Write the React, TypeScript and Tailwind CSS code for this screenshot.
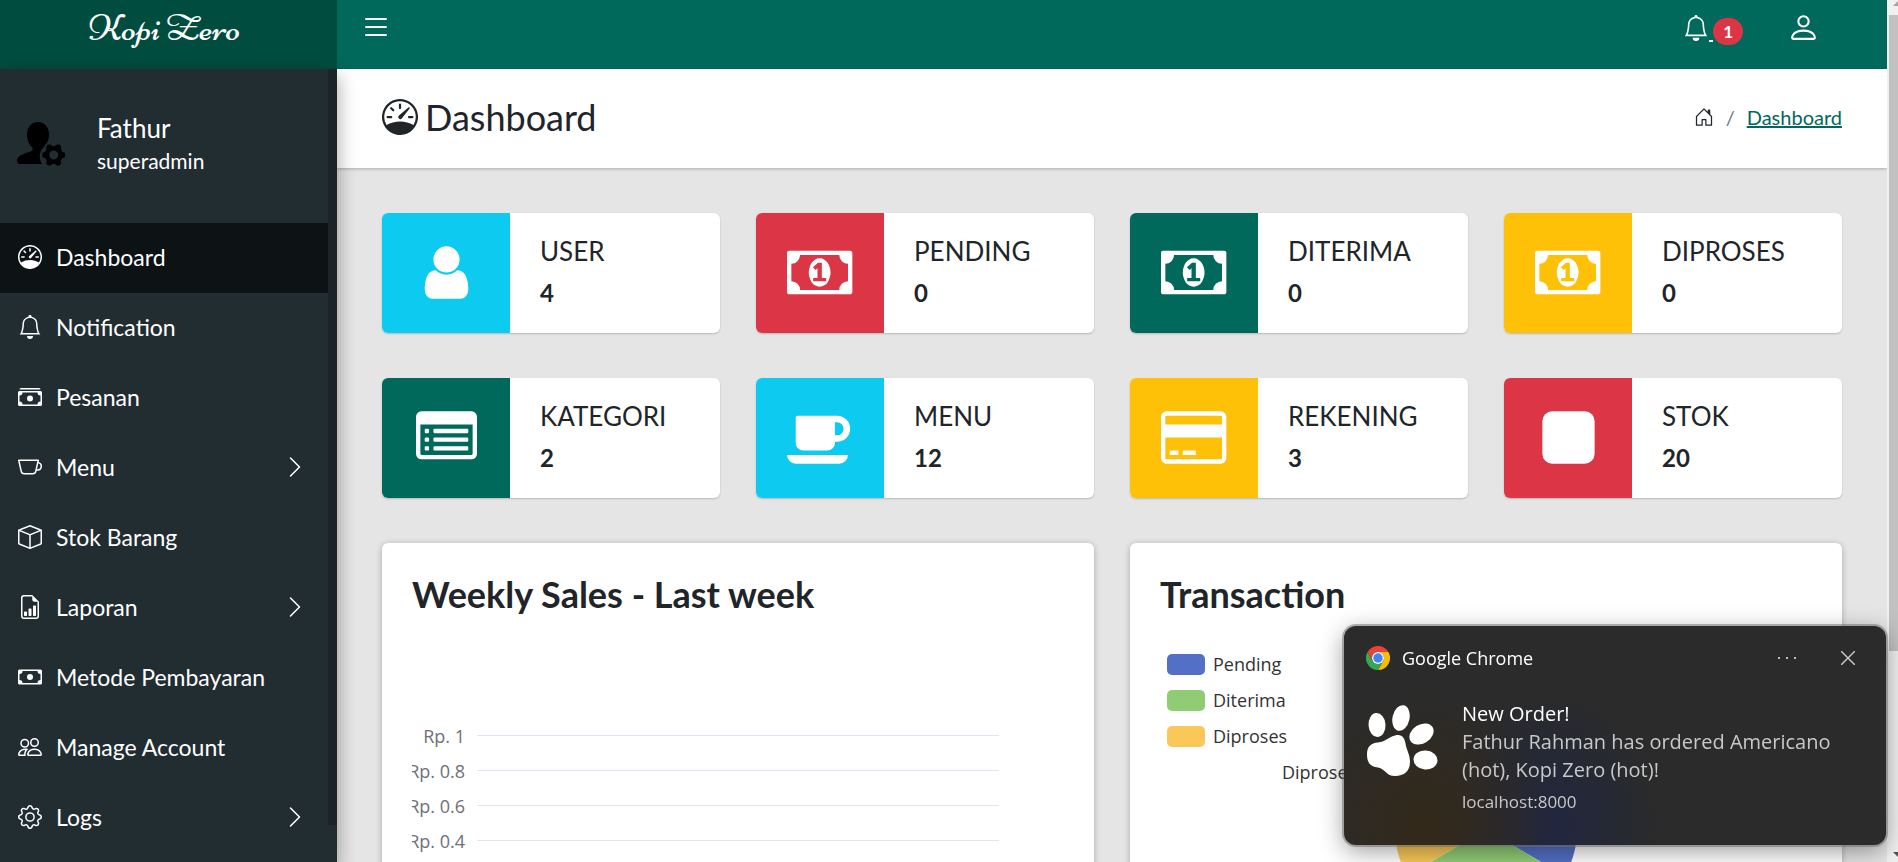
import React from 'react';
import {
  BsSpeedometer, BsBell, BsCashStack, BsCup, BsBox, BsFileEarmarkBarGraph, BsCash, BsPeople, BsGear,
  BsChevronRight, BsList, BsPerson, BsHouseDoor,
} from 'react-icons/bs';

type IconType = React.ComponentType<{ className?: string }>;

const menu: { label: string; icon: IconType; active?: boolean; more?: boolean }[] = [
  { label: 'Dashboard', icon: BsSpeedometer, active: true },
  { label: 'Notification', icon: BsBell },
  { label: 'Pesanan', icon: BsCashStack },
  { label: 'Menu', icon: BsCup, more: true },
  { label: 'Stok Barang', icon: BsBox },
  { label: 'Laporan', icon: BsFileEarmarkBarGraph, more: true },
  { label: 'Metode Pembayaran', icon: BsCash },
  { label: 'Manage Account', icon: BsPeople },
  { label: 'Logs', icon: BsGear, more: true },
];

const paths = {
  user: 'M1536 1399q0 109-62.5 187t-150.5 78h-854q-88 0-150.5-78t-62.5-187q0-85 8.5-160.5t31.5-152 58.5-131 94-89 134.5-34.5q131 128 313 128t313-128q76 0 134.5 34.5t94 89 58.5 131 31.5 152 8.5 160.5zm-256-887q0 159-112.5 271.5t-271.5 112.5-271.5-112.5-112.5-271.5 112.5-271.5 271.5-112.5 271.5 112.5 112.5 271.5z',
  money: 'M768 1152h384v-96h-128v-448h-114l-148 137 77 80q42-37 55-57h2v288h-128v96zm512-256q0 70-21 142t-59.5 134-101.5 101-138 39-138-39-101.5-101-59.5-134-21-142 21-142 59.5-134 101.5-101 138-39 138 39 101.5 101 59.5 134 21 142zm512 256v-512q-106 0-181-75t-75-181h-1152q0 106-75 181t-181 75v512q106 0 181 75t75 181h1152q0-106 75-181t181-75zm128-832v1152q0 26-19 45t-45 19h-1792q-26 0-45-19t-19-45v-1152q0-26 19-45t45-19h1792q26 0 45 19t19 45z',
  list: 'M160 128h1472q66 0 113 47t47 113v1088q0 66-47 113t-113 47h-1472q-66 0-113-47t-47-113v-1088q0-66 47-113t113-47zM128 512v864q0 32 32 32h1472q32 0 32-32v-864zM288 640h64q32 0 32 32v64q0 32-32 32h-64q-32 0-32-32v-64q0-32 32-32zM544 640h960q32 0 32 32v64q0 32-32 32h-960q-32 0-32-32v-64q0-32 32-32zM288 896h64q32 0 32 32v64q0 32-32 32h-64q-32 0-32-32v-64q0-32 32-32zM544 896h960q32 0 32 32v64q0 32-32 32h-960q-32 0-32-32v-64q0-32 32-32zM288 1152h64q32 0 32 32v64q0 32-32 32h-64q-32 0-32-32v-64q0-32 32-32zM544 1152h960q32 0 32 32v64q0 32-32 32h-960q-32 0-32-32v-64q0-32 32-32z',
  coffee: 'M1664 640q0-80-56-136t-136-56h-64v384h64q80 0 136-56t56-136zm-1664 768h1792q0 106-75 181t-181 75h-1280q-106 0-181-75t-75-181zm1856-768q0 159-112.5 271.5t-271.5 112.5h-64v32q0 92-66 158t-158 66h-704q-92 0-158-66t-66-158v-736q0-26 19-45t45-19h1152q159 0 271.5 112.5t112.5 271.5z',
  card: 'M1760 128q66 0 113 47t47 113v1216q0 66-47 113t-113 47h-1600q-66 0-113-47t-47-113v-1216q0-66 47-113t113-47h1600zm-1600 128q-13 0-22.5 9.5t-9.5 22.5v224h1664v-224q0-13-9.5-22.5t-22.5-9.5h-1600zm1600 1280q13 0 22.5-9.5t9.5-22.5v-608h-1664v608q0 13 9.5 22.5t22.5 9.5h1600zm-1504-128v-128h256v128h-256zm384 0v-128h384v128h-384z',
  square: 'M1664 416v960q0 119-84.5 203.5t-203.5 84.5h-960q-119 0-203.5-84.5t-84.5-203.5v-960q0-119 84.5-203.5t203.5-84.5h960q119 0 203.5 84.5t84.5 203.5z',
};

const tiles: { label: string; value: number; color: string; icon: keyof typeof paths; box: string }[] = [
  { label: 'USER', value: 4, color: 'bg-[#0dcaf0]', icon: 'user', box: '0 0 1792 1792' },
  { label: 'PENDING', value: 0, color: 'bg-[#dc3545]', icon: 'money', box: '0 0 1920 1792' },
  { label: 'DITERIMA', value: 0, color: 'bg-[#00695c]', icon: 'money', box: '0 0 1920 1792' },
  { label: 'DIPROSES', value: 0, color: 'bg-[#ffc107]', icon: 'money', box: '0 0 1920 1792' },
  { label: 'KATEGORI', value: 2, color: 'bg-[#00695c]', icon: 'list', box: '0 0 1792 1792' },
  { label: 'MENU', value: 12, color: 'bg-[#0dcaf0]', icon: 'coffee', box: '0 0 1920 1792' },
  { label: 'REKENING', value: 3, color: 'bg-[#ffc107]', icon: 'card', box: '0 0 1920 1792' },
  { label: 'STOK', value: 20, color: 'bg-[#dc3545]', icon: 'square', box: '0 0 1792 1792' },
];

const legend = [
  { label: 'Pending', color: 'bg-[#5470c6]' },
  { label: 'Diterima', color: 'bg-[#91cc75]' },
  { label: 'Diproses', color: 'bg-[#fac858]' },
];

const ticks = ['Rp. 1', 'Rp. 0.8', 'Rp. 0.6', 'Rp. 0.4', 'Rp. 0.2'];

function UserGear() {
  return (
    <svg viewBox="0 0 48 44" className="h-11 w-12 shrink-0" aria-hidden="true">
      <path d="M21 0C14 0 10 5.500 10 13c0 6 2.500 10 5.500 12.500v2.500C15 30.500 0 31.500 0 38.500 0 41 1.500 42 3 42h22c-3.500-6-3-13 2.500-17.500l-.5-.5C30 21.500 32 18 32 13 32 5.500 28 0 21 0z" />
      <circle cx="36.700" cy="33" r="6.800" fill="none" stroke="currentColor" strokeWidth="4.600" />
      <circle cx="45.200" cy="33" r="3.100" />
      <circle cx="28.200" cy="33" r="3.100" />
      <circle cx="41" cy="25.500" r="3.100" />
      <circle cx="32.400" cy="25.500" r="3.100" />
      <circle cx="41" cy="40.500" r="3.100" />
      <circle cx="32.400" cy="40.500" r="3.100" />
    </svg>
  );
}

function ChromeLogo() {
  return (
    <svg viewBox="0 0 48 48" className="size-6" aria-hidden="true">
      <path fill="#fbbc04" d="M44.800 12A24 24 0 0 1 24 48l10.400-18A12 12 0 0 0 24 12z" />
      <path fill="#34a853" d="M24 48A24 24 0 0 1 3.200 12l10.400 18A12 12 0 0 0 34.400 30z" />
      <path fill="#ea4335" d="M3.200 12A24 24 0 0 1 44.800 12H24a12 12 0 0 0-10.400 18z" />
      <circle cx="24" cy="24" r="12" fill="#fff" />
      <circle cx="24" cy="24" r="9.500" fill="#4285f4" />
    </svg>
  );
}

function Paw() {
  return (
    <svg viewBox="0 0 72 72" className="mt-[5px] size-[72px] shrink-0" fill="#fff" aria-hidden="true">
      <ellipse cx="11" cy="20" rx="8.500" ry="12" transform="rotate(-4 11 20)" />
      <ellipse cx="35" cy="13" rx="8.500" ry="13" transform="rotate(12 35 13)" />
      <ellipse cx="55.500" cy="29" rx="9.500" ry="13" transform="rotate(58 55.500 29)" />
      <ellipse cx="59.500" cy="55" rx="12" ry="9.500" transform="rotate(5 59.500 55)" />
      <path d="M29 30.500C36 28.500 38.500 33 39.500 38.500c1 7 4.500 10.500 4.500 18.500C44 66 38 71 29 71c-9 0-9.500-7-17-8.500C4 61.500 1 57.500 1 49.500 1 41.500 5 38 12 37.500c7-.7 10-5 17-7z" />
    </svg>
  );
}

export default function App() {
  return (
    <div className="flex h-screen overflow-hidden bg-[#e5e5e5] font-['Lato',sans-serif] text-[#212529]">
      <div className="flex min-w-0 flex-1 flex-col">
        <header className="flex h-[69px] shrink-0 bg-[#00695c] text-white">
          <a href="#" className="flex w-[337px] shrink-0 justify-center bg-[#004d40] pr-2 pt-2 font-['Niconne','Liberation_Serif',cursive] text-[38px] leading-10">
            Kopi Zero
          </a>
          <div className="flex flex-1 items-start justify-between pl-[23px] pr-[67px] pt-[11px]">
            <button aria-label="Toggle sidebar"><BsList className="size-8" /></button>
            <div className="flex items-start gap-11">
              <a href="#" aria-label="Notifications" className="flex items-start pt-1">
                <BsBell className="size-[26px]" />
                <span className="mt-[25px] h-[2px] w-1 bg-white" />
                <span className="mt-[3px] rounded-full bg-[#dc3545] px-[10px] text-[17px] font-bold leading-[27px]">1</span>
              </a>
              <button aria-label="Account"><BsPerson className="size-[33px]" /></button>
            </div>
          </div>
        </header>

        <div className="flex min-h-0 flex-1">
          <aside className="relative z-10 flex w-[337px] shrink-0 bg-[#222d32] text-white shadow-[0_8px_17px_rgba(0,0,0,0.2),0_6px_20px_rgba(0,0,0,0.19)]">
            <div className="min-w-0 flex-1">
              <div className="flex h-[154px] items-center gap-8 pb-[5px] pl-[17px]">
                <span className="text-black"><UserGear /></span>
                <div>
                  <p className="text-[26px] leading-[34px]">Fathur</p>
                  <p className="text-[21px] leading-8">superadmin</p>
                </div>
              </div>
              <nav>
                {menu.map(({ label, icon: Icon, active, more }) => (
                  <a key={label} href="#" className={`flex h-[70px] items-center gap-[14px] pb-[2px] pl-[18px] pr-[21px] text-[23px] ${active ? 'bg-[#0d1214]' : ''}`}>
                    <Icon className="size-6 shrink-0" />
                    <span className="flex-1">{label}</span>
                    {more && <BsChevronRight className="size-6" />}
                  </a>
                ))}
              </nav>
            </div>
            <div className="h-[756px] w-[9px] bg-[#1c242a]" />
          </aside>

          <main className="min-w-0 flex-1">
            <div className="flex h-[99px] items-center justify-between bg-white px-[45px] pb-1 shadow-[0_1px_3px_rgba(0,0,0,0.25)]">
              <h1 className="flex items-center gap-[7px] text-4xl font-normal"><BsSpeedometer className="size-9" />Dashboard</h1>
              <nav aria-label="Breadcrumb" className="flex items-center gap-3 text-xl">
                <BsHouseDoor className="size-5" />
                <span className="text-[#6c757d]">/</span>
                <a href="#" className="text-[#00695c] underline">Dashboard</a>
              </nav>
            </div>

            <div className="grid grid-cols-4 gap-x-9 gap-y-[45px] px-[45px] pt-[45px]">
              {tiles.map((t) => (
                <section key={t.label} className="flex h-[120px] overflow-hidden rounded-md bg-white shadow-[0_1px_2px_rgba(0,0,0,0.2)]">
                  <div className={`flex w-32 shrink-0 items-center justify-center pb-[2px] ${t.color}`}>
                    <svg viewBox={t.box} className="h-[61px]" fill="#fff" fillRule="evenodd" aria-hidden="true"><path d={paths[t.icon]} /></svg>
                  </div>
                  <div className="flex flex-col justify-center gap-[10px] pb-[2px] pl-[30px]">
                    <h2 className="text-[26px] leading-8">{t.label}</h2>
                    <p className="text-2xl font-bold leading-8">{t.value}</p>
                  </div>
                </section>
              ))}

              <section className="col-span-2 h-[600px] rounded-md bg-white px-[30px] pt-[29px] shadow-[0_1px_6px_rgba(0,0,0,0.25)]">
                <h2 className="text-4xl font-bold leading-[44px]">Weekly Sales - Last week</h2>
                <div className="overflow-hidden pr-[65px] pt-[102px] font-['Open_Sans',sans-serif] text-lg text-[#6e7079]">
                  {ticks.map((t) => (
                    <div key={t} className="flex h-[35px] items-center gap-3">
                      <span className="flex w-[53px] shrink-0 justify-end whitespace-nowrap">{t}</span>
                      <span className="h-px flex-1 bg-[#e0e6f1]" />
                    </div>
                  ))}
                </div>
              </section>

              <section className="relative col-span-2 h-[600px] rounded-md bg-white px-[30px] pt-[29px] shadow-[0_1px_6px_rgba(0,0,0,0.25)]">
                <h2 className="text-4xl font-bold leading-[44px]">Transaction</h2>
                <ul className="flex flex-col pl-[7px] pt-[30px] font-['Open_Sans',sans-serif] text-lg text-[#333]">
                  {legend.map((l) => (
                    <li key={l.label} className="flex h-9 items-center gap-2">
                      <span className={`h-[21px] w-[38px] rounded-[5px] ${l.color}`} />{l.label}
                    </li>
                  ))}
                </ul>
                <svg viewBox="0 0 400 200" className="absolute left-[152px] top-[210px] h-[200px] w-[400px]" aria-label="Transactions by status">
                  <text x="0" y="26" fontSize="18" fill="#333" fontFamily="Open Sans, sans-serif">Diproses</text>
                  <g transform="translate(204 77)">
                    <path fill="#5470c6" d="M0 0V-91A91 91 0 0 1 78.800 45.500z" />
                    <path fill="#91cc75" d="M0 0L78.800 45.500A91 91 0 0 1-78.800 45.500z" />
                    <path fill="#fac858" d="M0 0L-78.800 45.500A91 91 0 0 1 0-91z" />
                  </g>
                </svg>
              </section>
            </div>
          </main>
        </div>
      </div>

      <div className="flex w-[11px] shrink-0 flex-col items-end bg-[#f1f1f1]" aria-hidden="true">
        <svg viewBox="0 0 9 15" className="h-[15px] w-[9px]"><path d="M4 6h5V1z" fill="#a3a3a3" /></svg>
        <div className="h-[636px] w-[9px] bg-[#c1c1c1]" />
        <div className="flex-1" />
        <svg viewBox="0 0 9 15" className="h-[15px] w-[9px]"><path d="M4 5h5v5z" fill="#505050" /></svg>
      </div>

      <div role="alert" className="fixed bottom-[17px] right-[12px] z-20 h-[219px] w-[542px] rounded-xl bg-[#2b2b2b] bg-[radial-gradient(ellipse_130px_130px_at_15%_90%,#33291a_0,#33291a00_100%),radial-gradient(ellipse_110px_130px_at_38%_90%,#20263f_0,#20263f00_100%)] px-[22px] pt-5 font-['Open_Sans',sans-serif] text-white shadow-[0_0_0_2px_rgba(110,110,110,0.5),0_6px_24px_rgba(0,0,0,0.4)]">
        <div className="flex items-center">
          <ChromeLogo />
          <span className="flex-1 pl-3 text-lg leading-6">Google Chrome</span>
          <button aria-label="More options" className="flex gap-[6px] pr-[45px]">
            <i className="size-[2px] bg-[#bbb]" /><i className="size-[2px] bg-[#bbb]" /><i className="size-[2px] bg-[#bbb]" />
          </button>
          <button aria-label="Close" className="pr-[9px]">
            <svg viewBox="0 0 14 14" className="size-[14px]" stroke="#ccc" strokeWidth="1.400"><path d="M0 0l14 14M14 0L0 14" /></svg>
          </button>
        </div>
        <div className="flex items-start gap-6 pt-[30px]">
          <Paw />
          <div className="pr-6 text-xl leading-7">
            <p>New Order!</p>
            <p className="text-[#c8c8c8]">Fathur Rahman has ordered Americano (hot), Kopi Zero (hot)!</p>
            <p className="pt-[6px] text-[17px] leading-6 text-[#c8c8c8]">localhost:8000</p>
          </div>
        </div>
      </div>
    </div>
  );
}
